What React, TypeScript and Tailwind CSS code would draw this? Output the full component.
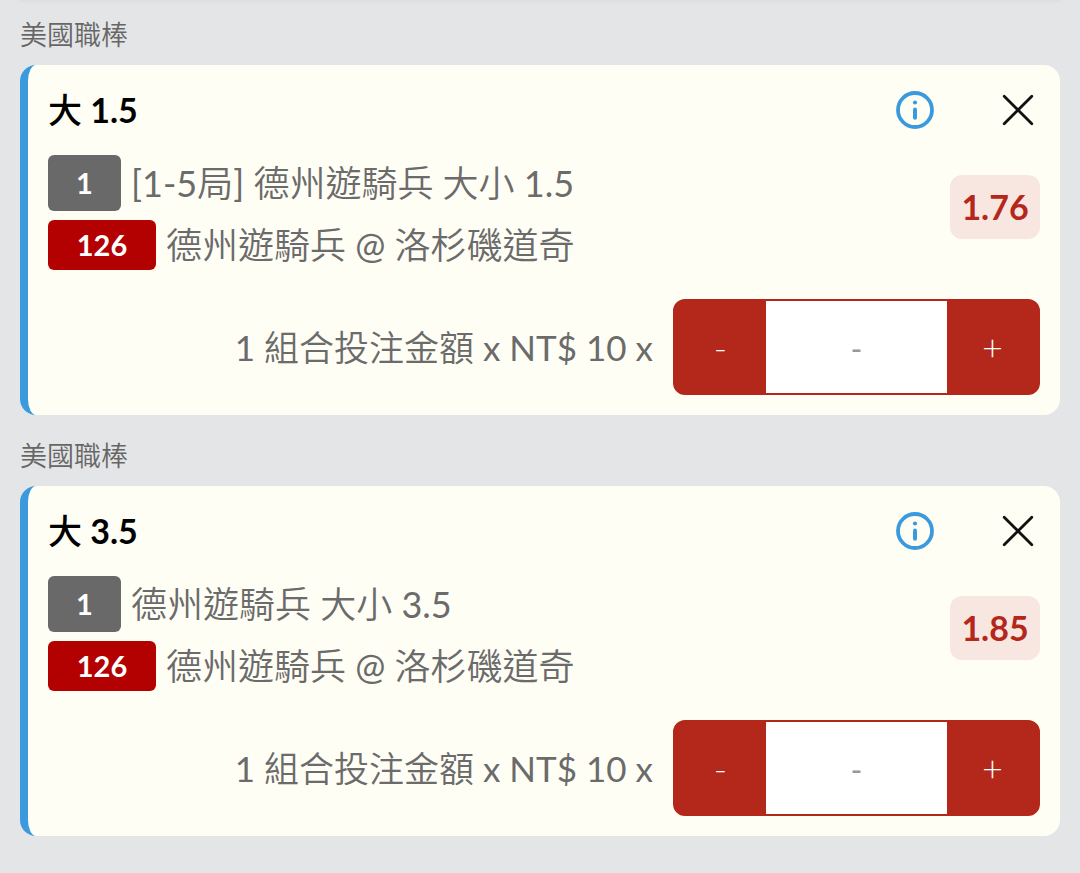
import { useState } from "react";

type Bet = {
  id: string;
  league: string;
  pick: string;
  market: string;
  match: string;
  odds: string;
};

const bets: Bet[] = [
  {
    id: "bet-a",
    league: "美國職棒",
    pick: "大 1.5",
    market: "[1-5局] 德州遊騎兵 大小 1.5",
    match: "德州遊騎兵 @ 洛杉磯道奇",
    odds: "1.76",
  },
  {
    id: "bet-b",
    league: "美國職棒",
    pick: "大 3.5",
    market: "德州遊騎兵 大小 3.5",
    match: "德州遊騎兵 @ 洛杉磯道奇",
    odds: "1.85",
  },
];

function InfoIcon() {
  return (
    <svg viewBox="0 0 38 38" className="size-[38px]" fill="none" aria-hidden="true">
      <circle cx="19" cy="19" r="17" stroke="#3a9add" strokeWidth="3.8" />
      <circle cx="19" cy="11.5" r="2.1" fill="#3a9add" />
      <path d="M19 18.6V26.8" stroke="#3a9add" strokeWidth="4" strokeLinecap="round" />
    </svg>
  );
}

function CloseIcon() {
  return (
    <svg viewBox="0 0 32 32" className="size-8" fill="none" aria-hidden="true">
      <path d="M2.2 2.2 29.8 29.8M29.8 2.2 2.2 29.8" stroke="#111" strokeWidth="2.8" strokeLinecap="round" />
    </svg>
  );
}

function Stepper({ id }: { id: string }) {
  const [value, setValue] = useState("");
  const count = Number(value) || 0;
  const step = (n: number) => setValue(n > 0 ? String(n) : "");
  return (
    <div className="flex h-24 w-[367px] shrink-0 overflow-hidden rounded-xl border-2 border-[#b4271b] bg-[#b4271b]">
      <button
        type="button"
        aria-label="減少"
        onClick={() => step(count - 1)}
        className="flex-1 text-[36px] font-light text-white"
      >
        -
      </button>
      <input
        id={id}
        type="text"
        inputMode="numeric"
        placeholder="-"
        value={value}
        onChange={(e) => setValue(e.target.value.replace(/\D/g, ""))}
        className="w-[181px] bg-white pt-1 text-center text-[32px] text-[#6b6b6b] outline-none placeholder:text-[#999]"
      />
      <button
        type="button"
        aria-label="增加"
        onClick={() => step(count + 1)}
        className="flex-1 text-[36px] font-light text-white"
      >
        +
      </button>
    </div>
  );
}

function BetCard({ bet, onRemove }: { bet: Bet; onRemove: () => void }) {
  return (
    <section>
      <h2 className="flex h-[60px] items-center text-[27px] leading-9 text-[#666]">{bet.league}</h2>
      <article className="rounded-2xl border-l-8 border-[#3a9add] bg-[#fffef5] px-5 pb-5">
        <header className="flex h-[90px] items-center">
          <h3 className="flex-1 font-['Lato','Noto_Sans_CJK_TC_Medium','Noto_Sans_CJK_TC',sans-serif] text-[34px] leading-10 font-bold text-black">
            {bet.pick}
          </h3>
          <button type="button" aria-label="詳情" className="mr-[68px]">
            <InfoIcon />
          </button>
          <button type="button" aria-label="移除" onClick={onRemove} className="mr-[6px]">
            <CloseIcon />
          </button>
        </header>
        <div className="flex items-start justify-between">
          <div className="flex flex-col gap-[9px] text-[36px] text-[#6b6b6b]">
            <div className="flex items-center gap-[10px]">
              <span className="flex h-14 w-[73px] items-center justify-center rounded-md bg-[#696969] text-[29px] font-bold text-white">
                1
              </span>
              <span className="leading-[50px]">{bet.market}</span>
            </div>
            <div className="flex items-center gap-[10px]">
              <span className="flex h-[50px] w-[108px] items-center justify-center rounded-md bg-[#b30000] text-[29px] font-bold text-white">
                126
              </span>
              <span className="leading-[50px]">{bet.match}</span>
            </div>
          </div>
          <strong className="mt-5 flex h-16 w-[90px] items-center justify-center rounded-xl bg-[#f8e6e0] text-[34px] leading-10 font-bold text-[#b4271b]">
            {bet.odds}
          </strong>
        </div>
        <div className="mt-[29px] flex items-center justify-end gap-5">
          <label htmlFor={bet.id} className="text-[35px] leading-[50px] text-[#6b6b6b]">
            1 組合投注金額 x NT$ 10 x
          </label>
          <Stepper id={bet.id} />
        </div>
      </article>
    </section>
  );
}

export default function App() {
  const [items, setItems] = useState(bets);
  return (
    <main className="relative min-h-screen bg-[#e4e5e7] px-5 pt-[5px] pb-5 font-['Lato','Noto_Sans_CJK_TC_DemiLight','Noto_Sans_CJK_TC',sans-serif]">
      <div className="absolute inset-x-5 top-0 h-1 bg-linear-to-b from-[#dddee0] to-[#e4e5e7]" />
      <div className="flex flex-col gap-[11px]">
        {items.map((bet) => (
          <BetCard key={bet.id} bet={bet} onRemove={() => setItems(items.filter((b) => b.id !== bet.id))} />
        ))}
      </div>
    </main>
  );
}
